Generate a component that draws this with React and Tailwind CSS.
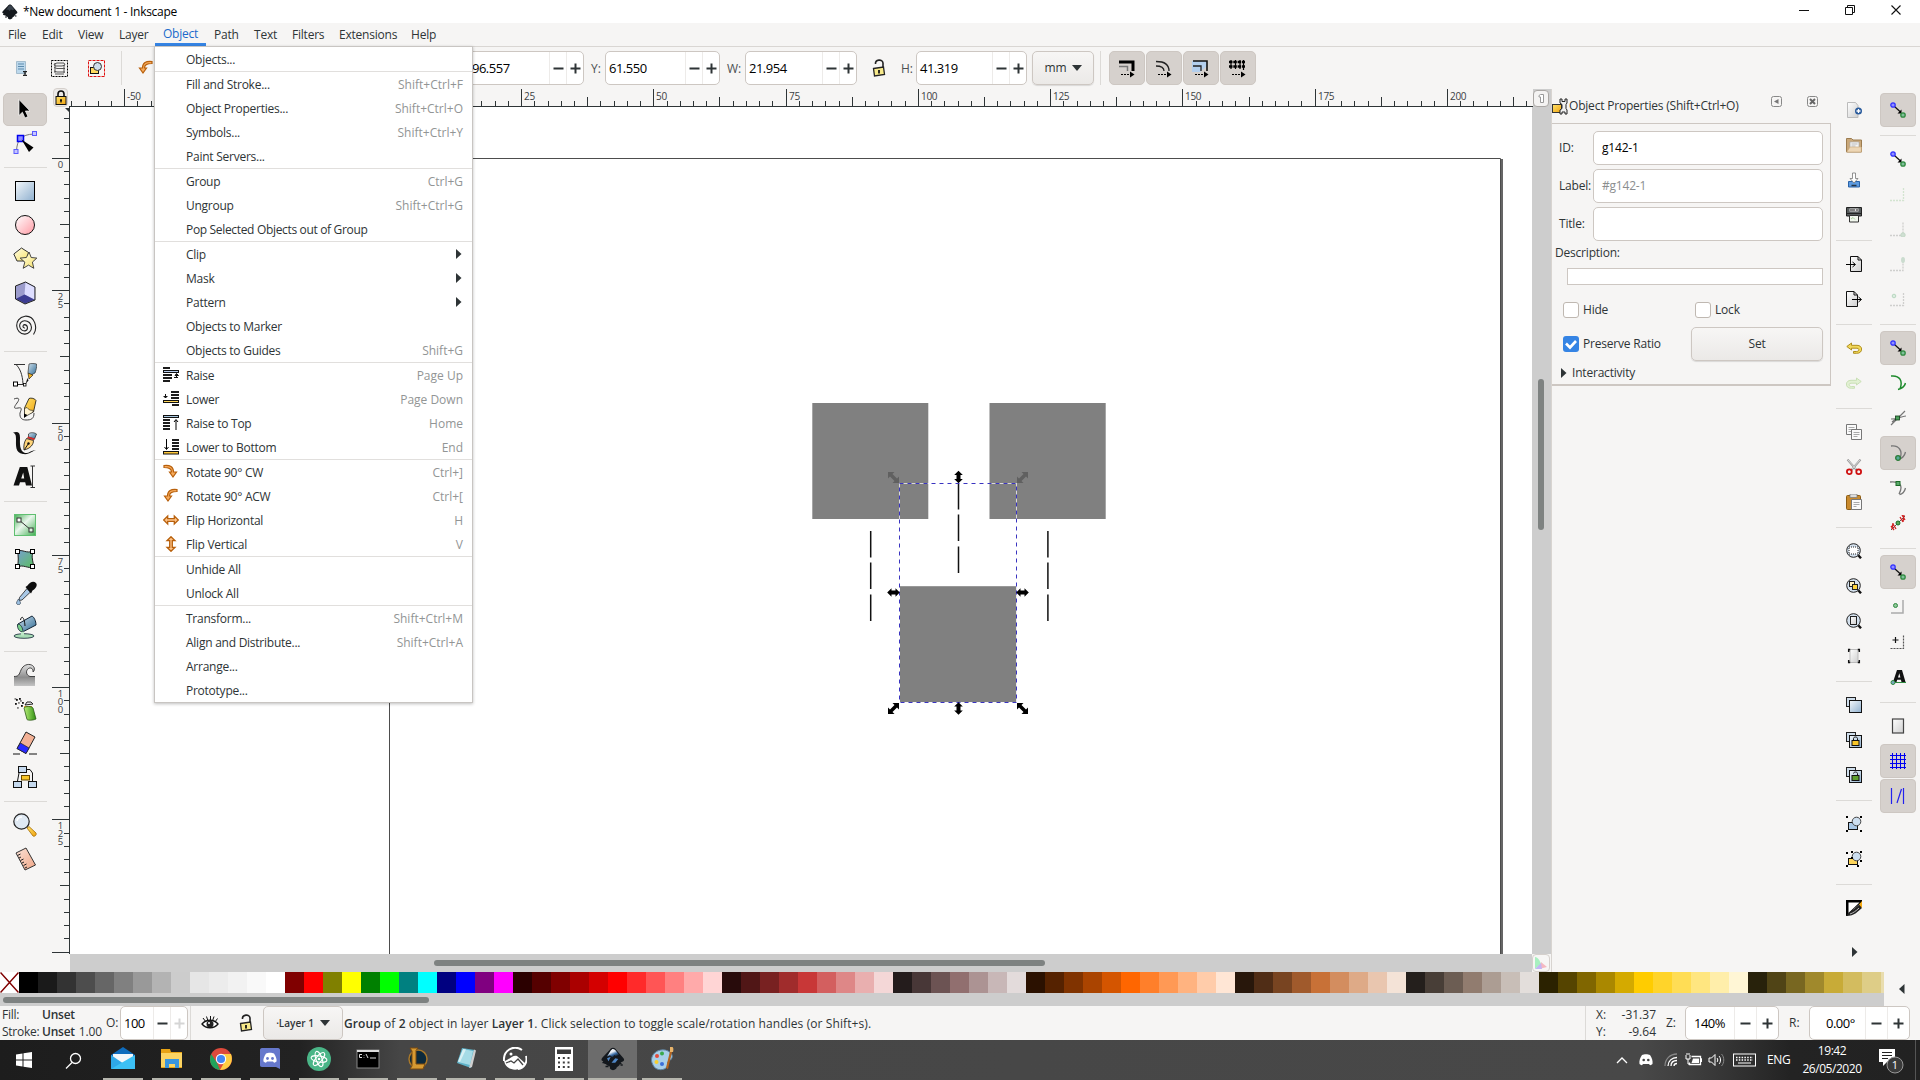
import React from "react";

const INK = "#2e3436";

/* ---------- small building blocks ---------- */

function Svg({ s = 24, w, h, vb, children, className = "" }) {
  return (
    <svg
      width={w || s}
      height={h || s}
      viewBox={vb || `0 0 ${w || s} ${h || s}`}
      fill="none"
      className={"block shrink-0 " + className}
    >
      {children}
    </svg>
  );
}

const Gradients = () => (
  <svg width="0" height="0" className="absolute">
    <defs>
      <linearGradient id="gBlue" x1="0" y1="0" x2="1" y2="1"><stop offset="0" stopColor="#f4f8fb" /><stop offset="1" stopColor="#8fb0cf" /></linearGradient>
      <linearGradient id="gPink" x1="0" y1="0" x2="1" y2="1"><stop offset="0" stopColor="#fff" /><stop offset="1" stopColor="#ff9aa4" /></linearGradient>
      <linearGradient id="gYellow" x1="0" y1="0" x2="1" y2="1"><stop offset="0" stopColor="#fffde8" /><stop offset="1" stopColor="#f8e36a" /></linearGradient>
      <linearGradient id="gGreen" x1="0" y1="0" x2="1" y2="1"><stop offset="0" stopColor="#48b058" /><stop offset=".45" stopColor="#eaf6ec" /><stop offset="1" stopColor="#3fae50" /></linearGradient>
      <linearGradient id="gMesh" x1="0" y1="0" x2="1" y2="1"><stop offset="0" stopColor="#76a0cf" /><stop offset="1" stopColor="#5cbf60" /></linearGradient>
      <linearGradient id="gGold" x1="0" y1="0" x2="1" y2="1"><stop offset="0" stopColor="#ffe36b" /><stop offset="1" stopColor="#f0a310" /></linearGradient>
      <linearGradient id="gGray" x1="0" y1="0" x2="0" y2="1"><stop offset="0" stopColor="#e0e0e0" /><stop offset=".6" stopColor="#8d8d8d" /><stop offset="1" stopColor="#c4c4c4" /></linearGradient>
      <linearGradient id="gSteel" x1="0" y1="0" x2="1" y2="1"><stop offset="0" stopColor="#cfe0ec" /><stop offset="1" stopColor="#2d6a94" /></linearGradient>
      <linearGradient id="gPaper" x1="0" y1="0" x2="1" y2="1"><stop offset="0" stopColor="#fff" /><stop offset="1" stopColor="#cfcfcf" /></linearGradient>
      <linearGradient id="gCan" x1="0" y1="0" x2="1" y2="0"><stop offset="0" stopColor="#b9f07a" /><stop offset="1" stopColor="#2f8f10" /></linearGradient>
      <linearGradient id="gSalmon" x1="0" y1="0" x2="1" y2="1"><stop offset="0" stopColor="#fbe3d8" /><stop offset="1" stopColor="#f0a585" /></linearGradient>
      <linearGradient id="gNight" x1="0" y1="0" x2=".6" y2="1"><stop offset="0" stopColor="#fff" /><stop offset=".45" stopColor="#e8eef5" /><stop offset=".7" stopColor="#3b6ea8" /><stop offset="1" stopColor="#0c0c0c" /></linearGradient>
    </defs>
  </svg>
);

/* ---------- toolbox icons (24 x 24) ---------- */

const toolIcons = {
  select: <><path d="M6 2.500v16l3.400-3.300 2.600 5.800 3-1.400-2.600-5.600H17z" fill="#000" stroke="#fff" strokeWidth=".7" /></>,
  node: <>
    <path d="M3.500 20C4 9 8 3.500 21 3" stroke="#777" />
    <rect x="1" y="18.500" width="4" height="4" fill="#c6c6ff" stroke="#5a5aff" />
    <rect x="19.500" y="0.500" width="4" height="4" fill="#c6c6ff" stroke="#5a5aff" />
    <rect x="4.500" y="4.500" width="6" height="6" fill="#8f8fff" stroke="#0000f0" strokeWidth="1.500" />
    <path d="M8.500 8.500l12 8-4.500 4.500z" fill="#000" />
  </>,
  rect: <rect x="2.500" y="2.500" width="19" height="19" fill="url(#gBlue)" stroke="#000" />,
  circle: <circle cx="12" cy="12" r="9.500" fill="url(#gPink)" stroke="#111" />,
  star: <>
    <path d="M8.500 1l7 4.500-2 8.500H4L0.800 7z" fill="url(#gYellow)" stroke="#333" />
    <path d="M16 5l2.200 5.500 5.600.6-4.400 4 1.400 6.200-5.300-3.200-5.300 3.200 1.600-6.200-4.600-4 6.200-.6z" fill="url(#gYellow)" stroke="#333" strokeWidth=".9" />
  </>,
  cube: <>
    <path d="M12.500 1L2.500 5v13l9.500 5 10-4V6z" fill="#9c9ccc" />
    <path d="M12.500 1.500l-1 12 10 5V6.200z" fill="#dedeff" />
    <path d="M11.500 13.500L3 17.800l9 4.700 9.500-3.800z" fill="#3d3d92" />
    <path d="M12.500 1L2.500 5v13l9.500 5 10-4V6z" stroke="#222" />
  </>,
  spiral: <path d="M12 13a1.700 1.700 0 0 1-.5-3.400a3.200 3.200 0 0 1 .5 6.300a5.100 5.100 0 0 1-.5-10.200a6.700 6.700 0 0 1 .5 13.400C2 19.500 0 3 12 1.200C22 .5 25 13 20.500 19.500" stroke="#222" strokeWidth="1.100" />,
  pen: <>
    <path d="M1 1.500h11M3 1.500c4 4 6.500 10 7 19.500M2 21.500h10" stroke="#333" />
    <rect x=".5" y="19" width="4" height="4" fill="#fff" stroke="#000" /><rect x="10.500" y="20.500" width="2.500" height="2.500" fill="#fff" stroke="#000" strokeWidth=".8" />
    <path d="M16 1c2-.8 6-.5 7.500 0 .6 3-.5 6-1.500 9l-5 2.500-2-3z" fill="url(#gSteel)" stroke="#333" strokeWidth=".7" />
    <path d="M15 10l5 2-4 4z" fill="#f3b321" stroke="#222" strokeWidth=".7" /><path d="M14.500 15l1 2.500-3 3.500z" fill="#111" />
  </>,
  pencil: <>
    <path d="M1 2c5-2 6 0 3 4s-4 6 1 5 3 2 2 5c-.5 5 2 7 6 7 5 0 8-1 8-7" stroke="#444" />
    <path d="M16 1.500c2-1 6 0 7 2L20.500 15l-9 3.500V11z" fill="url(#gGold)" stroke="#111" strokeWidth=".8" />
    <path d="M11.500 11.500l2.500-1 2.500 2.500 4 .5-1 2-8 4.500z" fill="#fff3cf" stroke="#111" strokeWidth=".6" /><path d="M11 16.500l3.500 1.500-3.500 3z" fill="#000" />
  </>,
  calli: <>
    <path d="M0 1.500c5-1.500 7 0 7 5S6 20 12 22c6 0 5-3 11-2.500-4 0-6 4.500-13 3.500C2 22 3 14 3 8 3 4 2.500 3 0 1.500z" fill="#111" />
    <path d="M15.500 3c2-2 6-1.500 8 0l-2 5-6-2z" fill="url(#gSteel)" stroke="#222" strokeWidth=".7" /><path d="M15 5.500l7 2-1 1.700-7-2z" fill="#d32b2b" />
    <path d="M13.500 7.500l7 2c0 4-3 8-9.500 9.500-.5-4 0-8 2.500-11.500z" fill="#ffd57a" stroke="#111" strokeWidth=".8" /><path d="M11.500 18.500l4-6" stroke="#111" /><circle cx="15.500" cy="12.500" r="1.200" fill="#111" />
  </>,
  text: <>
    <path fillRule="evenodd" d="M6.800 2h7.500L19 20.500h-6l-.8-3.200H7l-1 3.200H.5zM8.200 13.600h3l-1-6z" fill="#111" />
    <path d="M17.500 1h4.500M17.500 22.500h4.500M19.500 1v21.500" stroke="#333" />
  </>,
  gradient: <>
    <rect x="1.500" y="1.500" width="21" height="21" fill="url(#gGreen)" stroke="#5fbf70" /><path d="M6 7l12 10" stroke="#333" />
    <rect x="4" y="5" width="4" height="4" fill="#fff" stroke="#333" /><rect x="16" y="15" width="4" height="4" fill="#dff2e1" stroke="#333" />
  </>,
  mesh: <>
    <path d="M4.500 4c5-2 9 3 16 0-3 6 0 10 0 16-6 2-10-3-16 0 1-5 1-11 0-16z" fill="url(#gMesh)" stroke="#222" />
    {[[2.500, 2.500], [17.500, 2.500], [2.500, 17.500], [17.500, 17.500]].map(([x, y]) => <rect key={x + "-" + y} x={x} y={y} width="4" height="4" fill="#fff" stroke="#000" />)}
  </>,
  dropper: <>
    <path d="M14 7.500l3.500 3.500L9 19l-3 .5.500-3z" fill="#a9c8e6" stroke="#222" strokeWidth=".8" />
    <path d="M12.500 6l2-1.500C17 1 20.500-.5 23 2c2 2.500-.5 6-3.500 7.500L18 12.500z" fill="#0d0d0d" />
    <path d="M5.500 18c-1.200 2-2 3-2 4 0 2.200 4 2.200 4 0 0-1-.8-2-2-4z" fill="#9bbfe0" stroke="#345" strokeWidth=".7" />
  </>,
  bucket: <>
    <ellipse cx="11" cy="21" rx="10" ry="2.300" fill="#a8dcb5" stroke="#123" strokeWidth=".8" />
    <path d="M5 9L19 1c2 1 4 5 4 9L9.500 17C6.500 16 5 12 5 9z" fill="url(#gSteel)" stroke="#123" />
    <path d="M4.500 9.500c2-1.500 5.500 2.500 5.500 7.500-3 0-6-3-5.500-7.500z" fill="#79cf8b" stroke="#123" strokeWidth=".8" />
    <path d="M7.500 5c1-5 4-3 4.500 6" stroke="#111" /><path d="M8 17v3.500h3V16.500z" fill="#bfe8c8" />
  </>,
  tweak: <>
    <path d="M1 13.500c5 0 5-2 7-6.500 2-5 7-6.500 10.500-5 3 1.200 4 5 1.500 7 .5-3-2-5-4.500-3.500-3.500 2.500-2 7 1.500 8h5v9.500H1z" fill="url(#gGray)" />
    <path d="M1 13.500c5 0 5-2 7-6.500 2-5 7-6.500 10.500-5 3 1.200 4 5 1.500 7 .5-3-2-5-4.500-3.500-3.500 2.500-2 7 1.500 8h5" stroke="#333" strokeWidth=".9" />
  </>,
  spray: <>
    {[[3, 2], [7, 3], [2, 6], [5, 5], [9, 5], [4, 10], [8, 8], [1.500, 1], [6, 1]].map(([x, y], i) => <rect key={i} x={x} y={y} width="1.800" height="1.800" fill="#111" opacity={i % 2 ? 0.5 : 1} />)}
    <path d="M12 8l2-3h4l2 2z" fill="#e9e9e9" stroke="#222" /><path d="M11 9h8v2h-8z" fill="#e0a52b" />
    <path d="M11 11c1-2 8-2 9 0l3 11c-3 1.500-8 1.500-9 .5z" fill="url(#gCan)" stroke="#2c5a18" strokeWidth=".8" />
  </>,
  eraser: <>
    <path d="M13 1l9 5-9 16.500-9-5z" fill="#f3b195" stroke="#222" /><path d="M7.500 12l8.500 5-3 5.500-9-5z" fill="#2a2aff" stroke="#222" strokeWidth=".7" />
    <path d="M0 23h7M16 23h8" stroke="#111" />
  </>,
  connector: <>
    <path d="M6 8L4.500 16M14 4.500h3l2.500 3.500v9" stroke="#111" />
    <rect x="5.500" y="1.500" width="8" height="6" fill="#c5d9ee" stroke="#111" /><rect x="8.500" y="10.500" width="8" height="4.500" fill="#f8c629" stroke="#6b4a00" />
    <rect x=".5" y="16.500" width="8" height="6" fill="#c5d9ee" stroke="#111" /><rect x="15.500" y="16.500" width="8" height="6" fill="#c5d9ee" stroke="#111" />
  </>,
  zoom: <>
    <path d="M14 15l2-1.500 7 6.500c1 2-1.500 4-3 3z" fill="url(#gGold)" stroke="#a56b00" strokeWidth=".8" /><circle cx="8.500" cy="8.500" r="7.700" fill="#dfe9f3" stroke="#222" strokeWidth="1.200" />
    <path d="M4 8c.5-3 3-4 5-4" stroke="#fff" strokeWidth="1.500" />
  </>,
  measure: <>
    <path d="M3 6l10-5 9.500 17L12 23z" fill="url(#gSalmon)" stroke="#333" /><path d="M4.500 8.500l3-1.500M6 11l2-1M7.500 13.500l3-1.500M9 16l2-1M10.500 18.500l3-1.500M12 21l2-1" stroke="#222" />
  </>,
};

const TOOLS = [
  ["select", "node"],
  ["rect", "circle", "star", "cube", "spiral"],
  ["pen", "pencil", "calli", "text"],
  ["gradient", "mesh", "dropper", "bucket"],
  ["tweak", "spray", "eraser", "connector"],
  ["zoom", "measure"],
];

function Toolbox() {
  return (
    <div className="w-[52px] shrink-0 pt-[3px] pl-[3px] flex flex-col">
      {TOOLS.map((group, gi) => (
        <React.Fragment key={gi}>
          {gi > 0 && <div className="h-[14px] w-[43px] ml-px flex items-center"><div className="h-px w-full bg-[#dcdad7]" /></div>}
          {group.map((name) => (
            <div key={name} className="h-[34px] w-[44px] flex items-center justify-center">
              <div className={"h-[33px] w-[44px] rounded-[5px] flex items-center justify-center " + (name === "select" ? "bg-[#d6d1cd] border border-[#cdc7c2]" : "")}>
                <Svg>{toolIcons[name]}</Svg>
              </div>
            </div>
          ))}
        </React.Fragment>
      ))}
    </div>
  );
}

/* ---------- command bar icons (16 x 16) ---------- */

const Magnifier = ({ children }) => (
  <>
    <path d="M12 12l3 3.300" stroke="#111" strokeWidth="2.400" />
    <circle cx="7.500" cy="7.500" r="6.800" fill="#d4e1ee" stroke="#222" />
    {children}
  </>
);
const TwoSheets = ({ children }) => (
  <>
    <rect x=".5" y=".5" width="9" height="9" fill="#cfdeec" stroke="#222" />
    <rect x="3.500" y="3.500" width="12" height="12" fill="url(#gBlue)" stroke="#111" />
    {children}
  </>
);

const cmdIcons = {
  new: <><path d="M1.500.5h8l2.500 3v12H1.500z" fill="url(#gPaper)" stroke="#bbb" /><circle cx="12.500" cy="9" r="3.500" fill="#2a5b9c" /><path d="M12.500 7v4M10.500 9h4" stroke="#fff" strokeWidth="1.300" /></>,
  open: <><path d="M.5 1.500h5l1.500 1.500h8.500v12H.5z" fill="#c9a87a" stroke="#9c7c50" /><path d="M4 5h9v6H4z" fill="#f4f4f4" stroke="#aaa" strokeWidth=".7" /><path d="M5.500 7h6M5.500 9h4" stroke="#bbb" /><path d="M.8 15L4 10h11.300v5z" fill="#edd6b5" stroke="#c9a87a" strokeWidth=".6" /></>,
  save: <><path d="M2.500 9.500h11v5.500h-11z" fill="#5c9ae0" stroke="#2a63a8" /><path d="M5.500 13.500h5" stroke="#234" strokeWidth="1.500" /><path d="M6.500 1h3v5.500H12L8 11 4 6.500h2.500z" fill="#fff" stroke="#777" strokeWidth=".8" /></>,
  print: <><path d="M.5.500h15v8.500h-15z" fill="#565b5c" stroke="#222" /><path d="M3.500 1.500h9v3h-9z" fill="#dedede" /><path d="M4 3h5M10 3h2" stroke="#222" /><path d="M1 6.500h14" stroke="#222" /><path d="M3.500 8.500h9v6.500h-9z" fill="#f2f7ee" stroke="#333" /><path d="M5 12l2-1.500 2 2" stroke="#a7cf9b" /></>,
  import: <><path d="M4.500.5h7.500l3.500 3.500v11.500h-11z" fill="url(#gPaper)" stroke="#111" /><path d="M12 .5v3.500h3.500" stroke="#111" /><path d="M0 8.500h9M6.500 6l3 2.500-3 2.500" stroke="#000" /></>,
  export: <><path d="M.5.500h7.500L11.500 4v11.500H.5z" fill="url(#gPaper)" stroke="#111" /><path d="M8 .5V4h3.500" stroke="#111" /><path d="M6 8.500h9M12.500 6l3 2.500-3 2.500" stroke="#000" /></>,
  undo: <path d="M.8 6.500L5.500 3v2.300H11c6.500 0 6 8.500-.5 8H7.500v-1.800h3c3 0 3-3.300.5-3.300H5.500V10z" fill="#f2d85a" stroke="#a88510" strokeWidth=".9" />,
  redo: <path d="M15.200 6.500L10.500 3v2.300H5c-6.500 0-6 8.500.5 8H8.500v-1.800h-3c-3 0-3-3.300-.5-3.300h5.500V10z" fill="#e2f0d3" stroke="#c5deb0" strokeWidth=".9" />,
  copy: <><path d="M.5.500h10v10H.5z" fill="#fafafa" stroke="#777" /><path d="M2.500 3.500h6M2.500 5.500h6M2.500 7.500h4" stroke="#aaa" /><path d="M5.500 5.500h10v10h-10z" fill="#fafafa" stroke="#777" /><path d="M7.500 8.500h6M7.500 10.500h6M7.500 12.500h4" stroke="#aaa" /></>,
  cut: <><path d="M1.500.5L10.500 11M14.500.5L5.500 11" stroke="#999" strokeWidth="2" /><path d="M2 1l8 9M14 1L6 10" stroke="#f0f0f0" strokeWidth=".7" /><circle cx="3.300" cy="12.700" r="2.400" stroke="#cf1010" strokeWidth="1.800" /><circle cx="12.700" cy="12.700" r="2.400" stroke="#cf1010" strokeWidth="1.800" /></>,
  paste: <><rect x=".5" y="1.500" width="14" height="14" rx="1" fill="#c98a2d" stroke="#8c5c14" /><rect x="4" y="0" width="7" height="3.500" fill="#ddd" stroke="#777" strokeWidth=".7" /><path d="M5.500 5.500h10v10h-10z" fill="#fafafa" stroke="#777" /><path d="M7.500 8.500h6M7.500 10.500h6M7.500 12.500h3" stroke="#aaa" /></>,
  zsel: <Magnifier><rect x="3" y="4" width="9" height="7" fill="#fff" stroke="#222" strokeDasharray="1 1" /></Magnifier>,
  zdraw: <Magnifier><rect x="3.500" y="3.500" width="5" height="5" fill="#fff3c2" stroke="#222" /><rect x="6.500" y="6.500" width="5" height="5" fill="#ffd640" stroke="#222" /></Magnifier>,
  zpage: <Magnifier><rect x="4.500" y="3.500" width="6" height="8" fill="url(#gPaper)" stroke="#222" /></Magnifier>,
  zwidth: <><rect x="4" y="1.500" width="8" height="13" fill="url(#gPaper)" stroke="#bbb" /><path d="M2.700 4V1.500h1.500M13.300 4V1.500h-1.500M2.700 12v2.500h1.500M13.300 12v2.500h-1.500" stroke="#111" strokeWidth="1.500" /></>,
  dup: <TwoSheets />,
  clone: <TwoSheets><rect x="6" y="8.500" width="7" height="5" fill="#f8c629" stroke="#111" /><path d="M7.500 8.500V6.500c0-2 4-2 4 0v2" stroke="#111" /></TwoSheets>,
  unlink: <TwoSheets><rect x="6" y="8.500" width="7" height="5" fill="#5e9e2e" stroke="#111" /><path d="M7.500 6.500c0-2 4-2 4 0v2" stroke="#111" /></TwoSheets>,
  group: <><rect x="2.500" y="6.500" width="9" height="7" fill="#a9c8e6" stroke="#111" /><circle cx="10.500" cy="5.500" r="4.300" fill="#cddff0" stroke="#444" />{[[0, 0], [14, 0], [0, 14], [14, 14]].map(([x, y]) => <rect key={x + "." + y} x={x} y={y} width="2" height="2" fill="#000" />)}</>,
  ungroup: <><rect x="2.500" y="7.500" width="9" height="6" fill="#ffd65a" stroke="#111" /><circle cx="10.500" cy="5.500" r="4.300" fill="#cddff0" stroke="#444" />{[[0, 1], [5, 0], [14, 0], [0, 14], [11, 14], [14, 9], [5, 6]].map(([x, y]) => <rect key={x + "." + y} x={x} y={y} width="2" height="2" fill="#000" />)}</>,
  fill: <><path d="M0 0h16v16H0z" fill="#f6f5f4" /><path d="M0 0h16v2L2 14v2H0z" fill="#000" /><path d="M2.500 2.500h11L2.500 13z" fill="#fff" /><path d="M0 16c2-3 4-5 8-7l6-5 2 4c-4 3-7 8-16 8z" fill="#222" /><path d="M4 14c3-1 6-3 9-6" stroke="#bbb" /><path d="M13 4.500l3-3.500v7z" fill="#f5a911" /></>,
};

const COMMANDS = [
  ["new", "open", "save", "print"],
  ["import", "export"],
  ["undo", "redo"],
  ["copy", "cut", "paste"],
  ["zsel", "zdraw", "zpage", "zwidth"],
  ["dup", "clone", "unlink"],
  ["group", "ungroup"],
  ["fill"],
];

const SnapPair = () => (
  <>
    <path d="M4.500 4.500l6 5.500" stroke="#111" strokeWidth="1.200" />
    <path d="M11.500 7.500v4h-4z" fill="#000" />
    <circle cx="3" cy="3" r="2.200" fill="#8f8fff" stroke="#3333ff" strokeWidth="1.300" />
    <circle cx="13" cy="13" r="2.200" fill="#7fbf9a" stroke="#2f8a3f" strokeWidth="1.300" />
  </>
);
const dots = (d, color) => <path d={d} stroke={color} strokeWidth="1.300" strokeDasharray="2 1" />;
const snapIcons = {
  pair: <SnapPair />,
  bbox: dots("M0 14.500h13.500V1", "#d3e4d0"),
  bboxEdge: <>{dots("M0 14.500h13V1", "#cfcfcd")}<circle cx="13" cy="14" r="2.200" fill="#cfdfd2" stroke="#c3d8c6" /></>,
  bboxCorner: <>{dots("M0 14.500h13V6", "#cfcfcd")}<ellipse cx="13" cy="4" rx="2" ry="3" fill="#cbdccf" /></>,
  bboxMid: <>{dots("M0 14.500h13.500V1", "#cfcfcd")}<circle cx="4" cy="5" r="1.800" fill="#dcebe0" stroke="#b8d8c0" /></>,
  path: <path d="M1 1c9-1 12 5 9 13M15.500 8c-1 4-3 5.500-7.500 6.500" stroke="#1e8a2c" strokeWidth="1.500" />,
  cross: <><path d="M1 15L15 1M1 9c6 0 9-2 15-3M2 12l5-4" stroke="#777" strokeWidth="1.200" /><rect x="5.500" y="6" width="4" height="4" fill="#4aa05a" stroke="#123a18" strokeWidth=".8" /></>,
  cusp: <><path d="M1 1c8-1 12 5 9 12M15.500 7c-1 4-3 6-6 7" stroke="#777" strokeWidth="1.300" /><circle cx="8" cy="13" r="2.300" fill="#5a9" stroke="#2a7a35" strokeWidth="1.300" /></>,
  smooth: <><path d="M0 2c9-1 14 3 9 12M15.500 8c-1 4-3 6-6 6.500" stroke="#777" strokeWidth="1.300" /><rect x="6" y="1.500" width="4" height="4" fill="#5aa86a" stroke="#1a6a25" /></>,
  mid: <><path d="M1 15L15 1" stroke="#555" /><path d="M1 11l3 4M3 9l3 5M10 2l3 5M12 0l3 5M2 14l1-6M13 7l1-7" stroke="#d02020" strokeWidth="1.300" /><circle cx="8" cy="8" r="2" fill="#5a5" stroke="#1a6a25" /></>,
  center: <><path d="M1 14h12V1" stroke="#aaa" strokeWidth="1.500" /><circle cx="5.500" cy="6.500" r="2" fill="#8fc79a" stroke="#2f8a3f" /></>,
  rot: <><path d="M.5 14.500h13V1" stroke="#555" strokeWidth="1.200" strokeDasharray="2 1" /><path d="M5.500 3v6M2.500 6h6" stroke="#111" strokeWidth="1.200" /></>,
  baseline: <><path fillRule="evenodd" d="M7 1h5l3.500 12h-4l-.6-2.200H7.200L6.500 13H3zM8 8.500h2.400L9.300 4.300z" fill="#111" /><path d="M2 13.500h14" stroke="#2f8a3f" /><circle cx="3" cy="13.500" r="2" fill="#7aa8c0" stroke="#2f8a3f" /></>,
  page: <rect x="2.500" y="1" width="11" height="14" fill="url(#gPaper)" stroke="#444" strokeWidth="1.200" />,
  grid: <path d="M0 2.500h16M0 6.500h16M0 10.500h16M0 14.500h16M2.500 0v16M6.500 0v16M10.500 0v16M14.500 0v16" stroke="#0000f0" />,
  guides: <path d="M1.500 0v16M13.500 0v16M7 15L11.500 1" stroke="#2222ee" strokeWidth="1.200" />,
};

const SNAPS = [
  [["pair", 1]],
  [["pair"], ["bbox"], ["bboxEdge"], ["bboxCorner"], ["bboxMid"]],
  [["pair", 1], ["path"], ["cross"], ["cusp", 1], ["smooth"], ["mid"]],
  [["pair", 1], ["center"], ["rot"], ["baseline"]],
  [["page"], ["grid", 1], ["guides", 1]],
];

function IconColumn({ groups, icons, className }) {
  return (
    <div className={"shrink-0 pt-[4px] flex flex-col items-center " + className}>
      {groups.map((g, gi) => (
        <React.Fragment key={gi}>
          {gi > 0 && <div className="h-[14px] w-[36px] flex items-center"><div className="h-px w-full bg-[#dcdad7]" /></div>}
          {g.map((item, i) => {
            const [name, on] = Array.isArray(item) ? item : [item, 0];
            return (
              <div key={i} className="h-[35px] w-[36px]">
                <div className={"h-[34px] w-[36px] rounded-[4px] flex items-center justify-center " + (on ? "bg-[#d6d1cd] border border-[#cdc7c2]" : "")}>
                  <Svg s={16}>{icons[name]}</Svg>
                </div>
              </div>
            );
          })}
        </React.Fragment>
      ))}
      {icons === cmdIcons && (
        <Svg w={6} h={10} className="mt-[21px] ml-[2px]"><path d="M0 0l5.500 5L0 10z" fill={INK} /></Svg>
      )}
    </div>
  );
}

/* ---------- window title and menus ---------- */

const InkscapeLogo = ({ size = 16 }) => (
  <Svg s={size} vb="0 0 32 32">
    <path d="M16 1c2 0 3 1 4.500 3L30 15c2 3 0 4.500-4 5.500 3 1 1 2.500-1 2.500 0 2-3 3-4 4 0 2-2 3-5 4-3-1-5-2-4-4 0-2-5-2-5-4-3-1-6-1-5-3 2 0 1-1-1-2-1-1 0-2.500 1-4L11.500 4C13 2 14 1 16 1z" fill="#14181d" />
    <path d="M16 2.500c1.500 0 2.500 1 3.500 2l5 6.500-4 1.500-2.500-2-2.500 3.500-3.500-3-4 1.500 5-8c1-1.200 2-2 3-2z" fill={size > 20 ? "url(#gNight)" : "#39424c"} />
    {size > 20 && <path d="M8 15l5-2-3 6zM14 21l5-6 4 1-4 5z" fill="#4f86c6" />}
    <path d="M6 26h4M26 24h3" stroke="#14181d" strokeWidth="2" />
  </Svg>
);

function TitleBar() {
  return (
    <div className="h-[23px] shrink-0 bg-white flex items-center pl-[2px] text-[12px] text-black">
      <InkscapeLogo size={16} />
      <span className="ml-[5px] tracking-[-0.28px]">*New document 1 - Inkscape</span>
      <div className="ml-auto flex items-center gap-[36px] pr-[19px] pb-[3px]">
        <Svg s={10}><path d="M0 5.500h10" stroke="#111" /></Svg>
        <Svg s={10}><path d="M.5 2.500h7v7h-7zM2.500 2.500v-2h7v7h-2" stroke="#111" /></Svg>
        <Svg s={10}><path d="M.5.500l9 9M9.500.500l-9 9" stroke="#111" strokeWidth="1.100" /></Svg>
      </div>
    </div>
  );
}

const MENUS = [
  ["File", "w-[34px]"], ["Edit", "w-[36px]"], ["View", "w-[41px]"], ["Layer", "w-[44px]"], ["Object", "w-[51px]"],
  ["Path", "w-[40px]"], ["Text", "w-[38px]"], ["Filters", "w-[47px]"], ["Extensions", "w-[72px]"], ["Help", "w-[42px]"],
];

function MenuBar() {
  return (
    <div className="h-[24px] shrink-0 flex border-b border-[#d9d6d3] text-[12px] text-[#2e3436] tracking-[-0.22px]">
      {MENUS.map(([m, w]) => (
        <div key={m} className={"h-[23px] flex items-center pl-[8px] pt-px " + w + (m === "Object" ? " text-[#1b6acb] border-b-[3px] border-[#3584e4] pt-[4px]" : "")}>
          {m}
        </div>
      ))}
    </div>
  );
}

const bars = (xs) => xs.map(([x, y, w], i) => <rect key={i} x={x} y={y} width={w} height="2" fill="#1c1c1c" />);
const curl = "M1 1.500c6-.8 9.500 1.500 9.500 6.500h3L10 13 6.500 8H8.500c0-3-2.500-4.500-7.500-4.500z";
const flat = "M.7 8l4-4v2.700h6.600V4l4 4-4 4V9.300H4.700V12z";
const menuIcons = {
  raise: <>{bars([[0, 0, 7], [0, 7, 9], [0, 10, 9], [0, 13, 7]])}<rect x=".5" y="3.500" width="15" height="2" fill="#b7cdf0" stroke="#111" /><path d="M11 10.500h4M13.500 7v3.500M12 8.500l1.500-2 2 2z" stroke="#111" /></>,
  lower: <>{bars([[8, 0, 8], [8, 3, 8], [8, 6, 8], [9, 13, 7]])}<rect x=".5" y="9.500" width="15" height="2" fill="#ffd65a" stroke="#111" /><path d="M.5 5.500h4M2.500 3v4M1 6h3" stroke="#111" /></>,
  top: <>{bars([[0, 4, 7], [0, 7, 7], [0, 10, 7], [0, 13, 7]])}<rect x=".5" y=".5" width="15" height="2" fill="#a8c8e0" stroke="#111" /><path d="M13 15V5M11 7l2-2.500L15 7" stroke="#000" /></>,
  bottom: <>{bars([[9, 0, 7], [9, 3, 7], [9, 6, 7], [9, 9, 7]])}<rect x=".5" y="12.500" width="15" height="2.500" fill="#ffc83a" stroke="#111" /><path d="M3.500 0v10M1.500 8l2 2.500 2-2.500" stroke="#000" /></>,
  cw: <path d={curl} fill="#f7ab5c" stroke="#b8600c" strokeWidth="1.200" />,
  acw: <g transform="translate(15 0) scale(-1 1)"><path d={curl} fill="#f7ab5c" stroke="#b8600c" strokeWidth="1.200" /></g>,
  fliph: <path d={flat} fill="#ffc488" stroke="#b8600c" strokeWidth="1.300" />,
  flipv: <g transform="rotate(90 8 8)"><path d={flat} fill="#ffc488" stroke="#b8600c" strokeWidth="1.300" /></g>,
};

const OBJECT_MENU = [
  [["Objects..."]],
  [["Fill and Stroke...", "Shift+Ctrl+F"], ["Object Properties...", "Shift+Ctrl+O"], ["Symbols...", "Shift+Ctrl+Y"], ["Paint Servers..."]],
  [["Group", "Ctrl+G"], ["Ungroup", "Shift+Ctrl+G"], ["Pop Selected Objects out of Group"]],
  [["Clip", ">"], ["Mask", ">"], ["Pattern", ">"], ["Objects to Marker"], ["Objects to Guides", "Shift+G"]],
  [["Raise", "Page Up", "raise"], ["Lower", "Page Down", "lower"], ["Raise to Top", "Home", "top"], ["Lower to Bottom", "End", "bottom"]],
  [["Rotate 90° CW", "Ctrl+]", "cw"], ["Rotate 90° ACW", "Ctrl+[", "acw"], ["Flip Horizontal", "H", "fliph"], ["Flip Vertical", "V", "flipv"]],
  [["Unhide All"], ["Unlock All"]],
  [["Transform...", "Shift+Ctrl+M"], ["Align and Distribute...", "Shift+Ctrl+A"], ["Arrange..."], ["Prototype..."]],
];

function ObjectMenu() {
  return (
    <div className="absolute left-[154px] top-[46px] w-[319px] bg-white border border-[#c8c5c2] shadow-[0_1px_3px_rgba(0,0,0,0.25)] text-[12px] text-[#2e3436]">
      {OBJECT_MENU.map((group, gi) => (
        <div key={gi} className={gi ? "border-t border-[#e1dfdd]" : ""}>
          {group.map(([label, accel, icon]) => (
            <div key={label} className="h-[24px] flex items-center pl-[8px] pr-[9px]">
              <div className="w-[16px] h-[16px] mr-[7px]">{icon && <Svg s={16}>{menuIcons[icon]}</Svg>}</div>
              <span className={label.length > 30 ? "pt-px tracking-[-0.33px]" : "pt-px tracking-[-0.25px]"}>{label}</span>
              {accel === ">" ? (
                <Svg w={6} h={10} className="ml-auto mr-[1px]"><path d="M0 0l5.500 5L0 10z" fill={INK} /></Svg>
              ) : (
                <span className="ml-auto pt-px text-[#929595]">{accel}</span>
              )}
            </div>
          ))}
        </div>
      ))}
    </div>
  );
}

/* ---------- controls ---------- */

function Spin({ value, className, btn = "w-[17px]", align = "pl-[3px]", dim }) {
  return (
    <div className={"h-[34px] shrink-0 bg-white border border-[#cdc7c2] rounded-[5px] flex items-center text-[13px] text-black overflow-hidden " + className}>
      <span className={"flex-1 pt-px tracking-[-0.5px] " + align}>{value}</span>
      <div className={"h-full border-l border-[#edebe9] flex items-center justify-center " + btn}>
        <Svg s={11}><path d="M.5 5.500h10" stroke={INK} strokeWidth="2" /></Svg>
      </div>
      <div className={"h-full border-l border-[#edebe9] flex items-center justify-center " + btn}>
        <Svg s={11}><path d="M.5 5.500h10M5.500.5v10" stroke={dim ? "#d5d5d5" : INK} strokeWidth="2" /></Svg>
      </div>
    </div>
  );
}

const OpenLock = () => (
  <Svg w={14} h={18}>
    <path d="M3.500 5C3 .5 10.500-.5 11 4v5" stroke="#222" strokeWidth="1.600" />
    <path d="M1.500 9.500l10-1.500 1 7.500-10 1.500z" fill="#f7e98a" stroke="#222" strokeWidth="1.300" />
    <path d="M7 11v3.500" stroke="#111" strokeWidth="1.800" />
  </Svg>
);

const affectIcons = [
  <><path d="M1 2h14v9" stroke="#000" strokeWidth="3" /><path d="M1 6.500h8.500V11" stroke="#777" strokeWidth="1.500" /></>,
  <><path d="M1 1.500c9 0 13 3 13 9.500" stroke="#222" strokeWidth="1.300" /><path d="M1 6c5 0 8 1 8 5" stroke="#222" strokeWidth="1.300" /></>,
  <><path d="M0 1h15v5L8 12H0z" fill="#b3cfee" /><path d="M1 1h14v10" stroke="#111" strokeWidth="1.600" /><path d="M1 6h8v5" stroke="#222" strokeWidth="1.300" /></>,
  <><path d="M0 2h16M0 6.500h16" stroke="#000" strokeWidth="2.600" strokeDasharray="3.500 .8" /><path d="M2 0v9M6.500 0v9M11 0v9M14.500 0v10" stroke="#000" strokeWidth="1.200" /></>,
];

function ToolBar() {
  return (
    <div className="h-[42px] shrink-0 flex items-start pt-[4px] text-[12px] text-[#4c5052]">
      <div className="w-[121px] h-[34px] flex items-center pl-[14px] gap-[20px]">
        <Svg s={17}><path d="M2.500 1.500h9v12h-9z" fill="#bcd8ec" stroke="#a4bccd" /><path d="M4 4h6M4 6.500h6M4 9h6" stroke="#5d8bae" /><path d="M9 11.500h4M9 15.500h4M9.500 11.500l3 4M12.500 11.500l-3 4" stroke="#111" strokeWidth=".9" /></Svg>
        <Svg s={17}><rect x=".5" y=".5" width="16" height="16" stroke="#000" strokeDasharray="2 1" /><path d="M3 4l3-1h7l1 2-3 1H4zM3 7.500l3 1h8M3 11l3 1h8M4 14h9M4 4v9M13 5v8" fill="#eee" stroke="#555" /></Svg>
        <Svg s={17}><rect x=".5" y=".5" width="16" height="16" stroke="#e01010" strokeDasharray="3 1" /><rect x="2.500" y="7.500" width="8" height="6" fill="#ffd95e" stroke="#111" /><circle cx="9.500" cy="6.500" r="4" fill="#cfdeeb" stroke="#333" /></Svg>
      </div>
      <div className="h-[34px] w-px bg-[#dcdad7]" />
      <div className="h-[34px] w-[330px] flex items-center pl-[16px]"><Svg s={16}>{menuIcons.acw}</Svg></div>
      <Spin value="96.557" className="w-[117px] ml-[15px]" align="pl-[4px]" />
      <span className="w-[21px] pl-[7px] leading-[35px]">Y:</span>
      <Spin value="61.550" className="w-[115px]" />
      <span className="w-[25px] pl-[7px] leading-[35px]">W:</span>
      <Spin value="21.954" className="w-[112px]" />
      <div className="w-[44px] h-[34px] flex items-center justify-center"><OpenLock /></div>
      <span className="w-[15px] leading-[35px]">H:</span>
      <Spin value="41.319" className="w-[111px]" />
      <div className="ml-[5px] w-[62px] h-[34px] rounded-[5px] border border-[#cdc7c2] bg-linear-to-b from-[#f7f6f5] to-[#ebe9e7] shadow-[0_1px_1px_rgba(0,0,0,0.12)] flex items-center justify-center gap-[5px] text-[#2e3436]">
        mm <Svg w={10} h={6}><path d="M0 0h10L5 6z" fill={INK} /></Svg>
      </div>
      <div className="ml-[6px] mr-[8px] h-[34px] w-px bg-[#dcdad7]" />
      <div className="flex gap-px">
        {affectIcons.map((ic, i) => (
          <div key={i} className="w-[36px] h-[34px] rounded-[5px] border border-[#cdc7c2] bg-[#d6d1cd] flex items-center justify-center">
            <Svg s={18} className="mt-[2px]">
              {ic}
              <path d="M3 14.500h10" stroke="#000" strokeWidth="1.200" strokeDasharray="2 1" /><path d="M12 11.500l4.500 3-4.500 3z" fill="#000" />
            </Svg>
          </div>
        ))}
      </div>
    </div>
  );
}

/* ---------- rulers and canvas ---------- */

const STEP = 132.27;

function HRuler() {
  const ticks = [];
  for (let k = -24; k <= 86; k++) {
    const x = Math.round(389 + (k * STEP) / 10 - 52.2) + 0.5;
    if (x < 17 || x > 1480) continue;
    const major = k % 10 === 0;
    const mid = k % 5 === 0;
    ticks.push(<path key={k} d={`M${x} ${major ? 0 : mid ? 8 : 12}V17`} stroke={INK} />);
    if (major) ticks.push(<text key={"t" + k} x={x + 2.500} y="10.500" fontSize="10" letterSpacing="-.3" fill="#3b4043">{k * 2.5}</text>);
  }
  return <Svg w={1481} h={18}>{ticks}<path d="M17 17.500h1464" stroke={INK} /></Svg>;
}

function VRuler() {
  const ticks = [];
  for (let k = -3; k <= 60; k++) {
    const y = Math.round(158 + (k * STEP) / 10 - 107) + 0.5;
    if (y < 5 || y > 847) continue;
    const major = k % 10 === 0;
    const mid = k % 5 === 0;
    ticks.push(<path key={k} d={`M${major ? 0 : mid ? 8 : 12} ${y}H17`} stroke={INK} />);
    if (major && k < 60)
      String(k * 2.5).split("").forEach((c, i) =>
        ticks.push(<text key={k + "t" + i} x="8.500" y={y + 9.500 + i * 8} textAnchor="middle" fontSize="9.500" fill="#3b4043">{c}</text>)
      );
  }
  return <Svg w={18} h={847}>{ticks}<path d="M17.500 0v847" stroke={INK} /><path d="M13 1h4v4z" fill={INK} /></Svg>;
}

const DoubleArrow = ({ x, y, r, fill = "#000" }) => (
  <path transform={`translate(${x} ${y}) rotate(${r})`} d="M0-6.300L4.300-2H2V2h2.300L0 6.300-4.300 2H-2v-4h-2.300z" fill={fill} />
);
const DiagArrow = ({ x, y, flip, fill = "#000" }) => (
  <path transform={`translate(${x} ${y}) scale(${flip ? -1 : 1} 1)`} d="M-5.500-5.500H1L-1-3.500 3.500 1l2-2v6.500H-1l2-2L-3.500-1l-2 2z" fill={fill} />
);

function Canvas() {
  const lines = [[870.7, 531], [958.5, 483], [1047.9, 531]];
  return (
    <Svg w={1462} h={847} vb="70 107 1462 847" className="bg-white">
      <path d="M1500 159h3v800h-3z" fill="#666" />
      <path d="M389.500 960V158.500H1500.500V960" stroke="#4d4d4d" />
      <rect x="812.300" y="403" width="116" height="116" fill="#808080" />
      <rect x="989.500" y="403" width="116.200" height="116" fill="#808080" />
      <rect x="900" y="586.200" width="116.500" height="116" fill="#808080" />
      {lines.map(([x, y]) => (
        <path key={x} d={`M${x} ${y}v26.500m0 5v26.500m0 5.500v26.500`} stroke="#111" strokeWidth="1.500" />
      ))}
      <rect x="899.500" y="483.500" width="117" height="219" stroke="#fff" opacity=".7" />
      <rect x="899.500" y="483.500" width="117" height="219" stroke="#3a34c0" strokeDasharray="4 4" />
      <DoubleArrow x={958.5} y={477} r={0} />
      <DoubleArrow x={958.5} y={708.5} r={0} />
      <DoubleArrow x={893.5} y={592.5} r={90} />
      <DoubleArrow x={1022.5} y={592.5} r={90} />
      <DiagArrow x={893.5} y={477.5} fill="#606060" />
      <DiagArrow x={1022.5} y={477.5} flip fill="#606060" />
      <DiagArrow x={893.5} y={708.500} flip />
      <DiagArrow x={1022.5} y={708.500} />
    </Svg>
  );
}

function Workspace() {
  return (
    <div className="w-[1499px] shrink-0 flex flex-col">
      <div className="h-[18px] flex relative">
        <HRuler />
        <div className="w-[18px] bg-[#cdcdcd] flex items-center">
          <div className="w-[16px] h-[17px] shrink-0 rounded-[4px] border border-[#aaa7a4] bg-[#f4f3f2] flex items-center justify-center">
            <Svg w={6} h={9}><path d="M1 1.500L2.500.5h3v8h-3V3H1z" fill="#fff" stroke="#999" /></Svg>
          </div>
        </div>
        <div className="absolute left-px top-[-1px] w-[15px] h-[19px] rounded-[4px] border border-[#d5d0cc] bg-[#eceae8] flex items-center justify-center">
          <Svg w={12} h={15}><path d="M3 7V4c0-4 6-4 6 0v3" stroke="#111" strokeWidth="1.600" /><rect x="1" y="6.500" width="10" height="8" fill="url(#gGold)" stroke="#111" /><path d="M6 9v3.500M5 10.500h2" stroke="#111" strokeWidth="1.300" /></Svg>
        </div>
      </div>
      <div className="h-[847px] flex">
        <VRuler />
        <Canvas />
        <div className="w-[19px] bg-[#cdcdcd] pl-[6px] pt-[272px]">
          <div className="w-[6px] h-[151px] rounded-[3px] bg-[#7e8281]" />
        </div>
      </div>
      <div className="h-[18px] flex pl-[18px]">
        <div className="w-[1462px] bg-[#cdcdcd] pl-[364px] pt-[6px]">
          <div className="w-[611px] h-[6px] rounded-[3px] bg-[#7e8281]" />
        </div>
        <div className="w-[19px] flex items-center">
          <div className="w-[18px] h-[18px] rounded-[4px] border border-[#d5d0cc] bg-[#f7f6f5] flex items-center justify-center">
            <Svg w={14} h={16}><path d="M1 2c3 0 5 4 6 7L1 14z" fill="#a8f0c0" /><path d="M7 7l6 5-6 1.500z" fill="#f5b9c0" /><path d="M1 14l6-6 1 6z" fill="#c3b5f5" /></Svg>
          </div>
        </div>
      </div>
    </div>
  );
}

/* ---------- object properties dock ---------- */

const Field = ({ label, children }) => (
  <div className="flex items-center h-[38px]">
    <span className="w-[34px] whitespace-nowrap">{label}</span>
    {children}
  </div>
);
const input = "w-[230px] h-[34px] rounded-[5px] border border-[#cdc7c2] bg-white flex items-center pl-[8px]";
const Check = ({ label, on, w }) => (
  <div className={"flex items-center gap-[4px] whitespace-nowrap " + w}>
    <div className={"w-[16px] h-[16px] shrink-0 rounded-[3px] flex items-center justify-center " + (on ? "bg-[#3584e4]" : "bg-white border border-[#bfb8b1]")}>
      {on && <Svg s={16}><path d="M3 7.500L7 11.500l6-6.500" stroke="#fff" strokeWidth="2.600" /></Svg>}
    </div>
    <span>{label}</span>
  </div>
);

function Dock() {
  return (
    <div className="w-[280px] shrink-0 text-[12px] text-[#2e3436] border-l border-[#d8d4d0] tracking-[-0.2px]">
      <div className="h-[34px] flex items-center">
        <Svg s={17}><rect x=".5" y="6.500" width="9" height="8" fill="url(#gGold)" stroke="#333" /><path d="M8 1v4l2 1.500v4L8 12v4h2v-2h3v2h2v-4l-1-1.500v-4L15 5V1h-2v2.500h-3V1z" fill="#eee" stroke="#222" /></Svg>
        <span className="w-[202px] whitespace-nowrap">Object Properties (Shift+Ctrl+O)</span>
        <Svg s={11} className="mb-[9px]"><rect x=".5" y=".5" width="10" height="10" rx="2" stroke="#888" /><path d="M7.500 3v5L3 5.500z" fill="#777" /></Svg>
        <Svg s={11} className="mb-[9px] ml-[25px]"><rect x=".5" y=".5" width="10" height="10" rx="2" stroke="#888" /><path d="M3 3l5 5M8 3L3 8" stroke="#666" strokeWidth="2" /></Svg>
      </div>
      <div className="h-[263px] border border-l-0 border-b-2 border-[#cdc7c2] pt-[5px] pl-[7px] pr-[7px] flex flex-col">
        <Field label="ID:"><div className={input + " text-black"}>g142-1</div></Field>
        <Field label="Label:"><div className={input + " text-[#8b8e8f]"}>#g142-1</div></Field>
        <Field label="Title:"><div className={input} /></Field>
        <div className="-ml-[4px] h-[20px] leading-[20px]">Description:</div>
        <div className="ml-[8px] w-[256px] h-[17px] border border-[#cdc7c2] bg-white mt-[5px]" />
        <div className="flex pl-[4px] mt-[16px] h-[18px] items-center"><Check label="Hide" w="w-[132px]" /><Check label="Lock" w="w-[100px]" /></div>
        <div className="flex pl-[4px] mt-[8px] h-[34px] items-center justify-between">
          <Check label="Preserve Ratio" on w="w-[124px]" />
          <div className="w-[132px] h-[34px] shrink-0 rounded-[5px] border border-[#cdc7c2] bg-linear-to-b from-[#f7f6f5] to-[#ebe9e7] shadow-[0_1px_1px_rgba(0,0,0,0.12)] flex items-center justify-center">Set</div>
        </div>
        <div className="flex items-center gap-[5px] pl-[2px] mt-[3px] h-[17px]">
          <Svg w={6} h={10}><path d="M0 0l5.500 5L0 10z" fill={INK} /></Svg>Interactivity
        </div>
      </div>
    </div>
  );
}

/* ---------- palette ---------- */

const SWATCHES = (
  "000000 1a1a1a 333333 4d4d4d 666666 808080 999999 b3b3b3 cccccc e6e6e6 ececec f2f2f2 f9f9f9 ffffff " +
  "800000 ff0000 808000 ffff00 008000 00ff00 008080 00ffff 000080 0000ff 800080 ff00ff " +
  "2b0000 550000 800000 aa0000 d40000 ff0000 ff2a2a ff5555 ff8080 ffaaaa ffd5d5 " +
  "280b0b 501616 782121 a02c2c c83737 d35f5f de8787 e9afaf f4d7d7 " +
  "241c1c 483737 6c5353 916f6f ac9393 c8b7b7 e3dbdb " +
  "2b1100 552200 803300 aa4400 d45500 ff6600 ff7f2a ff9955 ffb380 ffccaa ffe6d5 " +
  "28170b 502d16 784421 a05a2c c87137 d38d5f deaa87 e9c6af f4e3d7 " +
  "241f1c 483e37 6c5d53 917c6f ac9d93 c8beb7 e3dedb " +
  "2b2200 554400 806600 aa8800 d4aa00 ffcc00 ffd42a ffdd55 ffe680 ffeeaa fff6d5 " +
  "28220b 504416 786721 a0892c c8ab37 d3bc5f decd87 e9ddaf"
).split(" ");

function Palette() {
  return (
    <div className="h-[34px] shrink-0 flex">
      <div className="w-[1884px] overflow-hidden">
        <div className="h-[21px] flex">
          <Svg w={19} h={21} className="bg-white"><path d="M.5.500l18 20M18.500.5l-18 20" stroke="#800000" strokeWidth="1.500" /></Svg>
          {SWATCHES.map((c, i) => <div key={i} className="w-[19px] h-[21px] shrink-0" style={{ backgroundColor: "#" + c }} />)}
        </div>
        <div className="h-[13px] bg-[#cdcdcd] pt-[4px] pl-[3px]"><div className="w-[426px] h-[6px] rounded-[3px] bg-[#7e8281]" /></div>
      </div>
      <div className="flex-1 pl-[15px] pt-[12px]"><Svg w={6} h={10}><path d="M5.500 0L0 5l5.500 5z" fill={INK} /></Svg></div>
    </div>
  );
}

/* ---------- status bar ---------- */

function StatusBar() {
  return (
    <div className="h-[34px] shrink-0 flex items-center text-[12px] text-[#2e3436] whitespace-nowrap">
      <div className="w-[105px] pl-[2px] flex flex-col leading-[17px] tracking-[-0.25px]">
        <div className="flex"><span className="w-[40px]">Fill:</span><b className="font-semibold">Unset</b></div>
        <div className="flex"><span className="w-[40px]">Stroke:</span><b className="font-semibold">Unset</b><span className="ml-[4px] tracking-[-0.1px]">1.00</span></div>
      </div>
      <span className="w-[15px] pl-px">O:</span>
      <Spin value="100" className="w-[68px]" align="pl-[3px]" dim />
      <div className="ml-[2px] h-[34px] w-px bg-[#dcdad7]" />
      <Svg w={18} h={14} className="ml-[10px]"><path d="M1 8c4-5 12-5 16 0-4 5-12 5-16 0z" fill="#fff" stroke="#111" strokeWidth="1.300" /><circle cx="9" cy="8" r="3.500" fill="#222" /><circle cx="8" cy="7" r="1" fill="#fff" /><path d="M2 2l3 4M5.500.5L7 5M9.500 0v4M13 .5L11.500 5M16.500 2.500L14 6" stroke="#111" /></Svg>
      <div className="ml-[20px]"><OpenLock /></div>
      <div className="ml-[10px] w-[80px] h-[34px] rounded-[5px] border border-[#cdc7c2] bg-linear-to-b from-[#f7f6f5] to-[#ebe9e7] flex items-center justify-center gap-[6px] font-semibold text-[10px]">
        <span>·Layer 1</span><Svg w={10} h={6}><path d="M0 0h10L5 6z" fill={INK} /></Svg>
      </div>
      <span className="ml-px pt-[2px] tracking-[0.09px]"><b className="font-semibold">Group</b> of <b className="font-semibold">2</b> object in layer <b className="font-semibold">Layer 1</b>. Click selection to toggle scale/rotation handles (or Shift+s).</span>
      <div className="ml-auto flex items-center">
        <div className="h-[34px] w-px bg-[#dcdad7]" />
        <div className="w-[70px] pl-[10px] leading-[17px]">
          <div className="flex justify-between"><span>X:</span><span>-31.37</span></div>
          <div className="flex justify-between"><span>Y:</span><span>-9.64</span></div>
        </div>
        <span className="w-[29px] pl-[10px]">Z:</span>
        <Spin value="140%" className="w-[94px]" align="pl-[8px]" btn="w-[22px]" />
        <span className="w-[30px] pl-[10px]">R:</span>
        <Spin value="0.00°" className="w-[101px] mr-[10px]" align="pl-[16px]" btn="w-[22px]" />
      </div>
    </div>
  );
}

/* ---------- Windows taskbar ---------- */

const appIcons = {
  mail: <><path d="M0 8L12 0l12 8v14H0z" fill="#0f6cbd" /><path d="M2 7h20v6l-10 6L2 13z" fill="#f3f7fa" /><path d="M0 8l13 9L0 22z" fill="#2ea8e8" /><path d="M24 8v14H0z" fill="#3cc0f5" /></>,
  folder: <><path d="M1 2h9l1 3h11v16H1z" fill="#e8a315" /><path d="M1 6h21v14H1z" fill="#fcd462" /><path d="M5 21v-9h14v9h-4v-4H9v4z" fill="#3a96dd" /></>,
  chrome: <><circle cx="12" cy="12" r="11" fill="#de4a3c" /><path d="M2.200 7L8 16l3 7C2.500 22.500-1 14 2.200 7z" fill="#21a35b" /><path d="M12 7h10c3 8-2 16-11 16l5-9z" fill="#ffce43" /><circle cx="12" cy="12" r="5.200" fill="#fff" /><circle cx="12" cy="12" r="4.100" fill="#4587f3" /></>,
  discord: <><path d="M4 1h16c1.500 0 2 1 2 2v19l-4-2H4c-1.500 0-2-1-2-2V3c0-1 .5-2 2-2z" fill="#6678cc" /><path d="M8 6.500c2-1 6-1 8 0 2 3 3 6 2.500 8-1.500 1.500-3 1.500-3.500 0H9c-.5 1.500-2 1.500-3.500 0-.5-2 .5-5 2.500-8z" fill="#fff" /><circle cx="9.500" cy="11.500" r="1.400" fill="#6678cc" /><circle cx="14.500" cy="11.500" r="1.400" fill="#6678cc" /></>,
  atom: <><circle cx="12" cy="12" r="12" fill="#4ab587" /><g stroke="#fff" strokeWidth="1.100"><ellipse cx="12" cy="12" rx="8" ry="3" transform="rotate(10 12 12)" /><ellipse cx="12" cy="12" rx="8" ry="3" transform="rotate(70 12 12)" /><ellipse cx="12" cy="12" rx="8" ry="3" transform="rotate(130 12 12)" /></g><circle cx="12" cy="12" r="1.300" fill="#fff" /></>,
  cmd: <><rect x="1" y="3" width="22" height="18" fill="#000" stroke="#888" /><path d="M1 3h22v2H1z" fill="#ddd" /><path d="M6 7.500H3.500v3H6M8 8v.5M8 10v.5M10 7l2 4M14 11h6" stroke="#ddd" /></>,
  league: <><circle cx="13" cy="12" r="9" fill="#0c2a3c" stroke="#a8782a" strokeWidth="1.500" /><path d="M5 1h8l-2 2.500V17h9l-2 5H5l2-3V4z" fill="#d69a32" stroke="#7a4b10" /></>,
  note: <><path d="M8 1l13 2-4 18L3 16z" fill="#5fb3c9" /><path d="M9 2l10 2-3 14-12-3z" fill="#a5dbe6" /><path d="M20 2.500l2 1L18 20l-3 1z" fill="#cfcfcf" /><path d="M9 2l3 .5L6 15l-2-.5z" fill="#d7f0f4" /></>,
  gauge: <><path d="M1 14C0 4 10-3 19 3M23 9c2 6-2 12-8 13" stroke="#fff" strokeWidth="2" /><path d="M1 14c4 0 9-7 13-5l9 8c-4 7-17 8-21 0z" fill="#fff" /><path d="M3 16l5-2 3 2 4-4 5 6" stroke="#444" strokeWidth="1.300" /><circle cx="8" cy="7" r="1.500" fill="#fff" /></>,
  calc: <><rect x="3" y="0" width="18" height="24" fill="#fff" /><path d="M5 2.500h14v4.500H5z" fill="#3c3c3c" />{[10, 14.500, 19].map((y) => [6, 10.800, 15.500].map((x) => <rect key={x + "," + y} x={x} y={y} width="2" height="2" fill="#3c3c3c" />))}</>,
  paint: <><path d="M2 10c2-6 10-9 16-6s5 8 1 10c-3 1 0 4-3 7-4 3-11 2-13-3-1.500-3-2-5-1-8z" fill="#a9cfe8" stroke="#5f86a5" /><circle cx="7" cy="9" r="2" fill="#e34b3b" /><circle cx="12" cy="6.500" r="2" fill="#3aa94c" /><circle cx="6.500" cy="15" r="2" fill="#f6cf2e" /><circle cx="12" cy="17" r="2" fill="#3b6fd9" /><path d="M21 0l2 1-5 21-2-1z" fill="#b4641e" /><path d="M20 0c3-1 4 1 3 5h-3z" fill="#e7b36a" /></>,
};
const APPS = ["mail", "folder", "chrome", "discord", "atom", "cmd", "league", "note", "gauge", "calc"];

const TaskItem = ({ children, active }) => (
  <div className={"w-[49px] h-[40px] flex flex-col items-center " + (active ? "bg-[#6c6c6c]" : "")}>
    <div className="flex-1 flex items-center">{children}</div>
    <div className={"h-[2px] bg-[#b5b5ad] " + (active ? "w-[49px]" : "w-[40px]")} />
  </div>
);

function Taskbar() {
  return (
    <div className="h-[40px] shrink-0 flex items-center text-white bg-[linear-gradient(90deg,#1d1d1d_0px,#222_300px,#464646_400px,#484848_1640px,#3c3c3c_1700px,#232323_1790px,#222_1920px)]">
      <div className="w-[48px] flex justify-center"><Svg s={16}><path d="M0 2.500l6.500-1v6H0zM7.500 1.300L16 0v7.500H7.500zM0 8.500h6.500v6L0 13.600zM7.500 8.500H16V16l-8.500-1.200z" fill="#fff" /></Svg></div>
      <div className="w-[50px] flex justify-center"><Svg s={17}><circle cx="10.500" cy="6.500" r="5" stroke="#fff" strokeWidth="1.300" /><path d="M7 10.500L1 16.500" stroke="#fff" strokeWidth="1.300" /></Svg></div>
      {APPS.map((a) => <TaskItem key={a}><Svg>{appIcons[a]}</Svg></TaskItem>)}
      <TaskItem active><InkscapeLogo size={24} /></TaskItem>
      <TaskItem><Svg>{appIcons.paint}</Svg></TaskItem>
      <div className="ml-auto flex items-center text-[12px]">
        <Svg w={12} h={8} className="mr-[11px]"><path d="M1 7l5-5 5 5" stroke="#fff" strokeWidth="1.300" /></Svg>
        <Svg w={14} h={12} className="mr-[11px]"><path d="M3 1c2-1 6-1 8 0 2 3 3 6 2.500 9-1.500 1.500-3 1.500-3.500 0H4c-.5 1.500-2 1.500-3.500 0C0 7 1 4 3 1z" fill="#fff" /><circle cx="4.700" cy="6" r="1.300" fill="#444" /><circle cx="9.300" cy="6" r="1.300" fill="#444" /></Svg>
        <Svg s={14} className="mr-[7px]"><path d="M1 13C1 6 6 1 13 1" stroke="#888" strokeWidth="1.300" /><path d="M4 13c0-5 4-8.500 9-8.500M7 13c0-3.500 2.500-5.500 6-5.500M10 13c0-1.800 1-2.500 3-2.500" stroke="#fff" strokeWidth="1.300" /></Svg>
        <Svg w={17} h={14} className="mr-[6px]"><path d="M6.500 3.500h9v8h-11v-2M15.500 6h1v3" stroke="#fff" strokeWidth="1.300" /><path d="M8 5.500h6v4.500H6.500z" fill="#fff" /><path d="M1 2v4h4V2M2 0v2M4 0v2M3 6v5h2" stroke="#fff" /></Svg>
        <Svg w={17} h={14} className="mr-[8px]"><path d="M1 5h2.500L7 1.500v11L3.500 9H1z" stroke="#fff" /><path d="M9 5c1 1 1 3 0 4M11 3c2 2 2 6 0 8" stroke="#fff" /><path d="M13.500 1c3 3 3 9 0 12" stroke="#888" /></Svg>
        <Svg w={23} h={14} className="mr-[11px]"><rect x=".5" y="1" width="22" height="12" stroke="#fff" /><path d="M3 4.500h17M3 7h17" stroke="#fff" strokeDasharray="1.500 1.300" strokeWidth="1.300" /><path d="M5 10h13" stroke="#fff" /></Svg>
        <span className="w-[35px] tracking-[-0.3px]">ENG</span>
        <div className="w-[60px] flex flex-col items-center leading-[18px] tracking-[-0.45px]"><span>19:42</span><span>26/05/2020</span></div>
        <div className="w-[50px] flex pl-[13px] ml-[3px]">
          <Svg w={26} h={28} className="mt-[4px]"><path d="M1 1h16v13H9l-4 4v-4H1z" fill="#fff" /><path d="M4 4.500h10M4 7.500h10M4 10.500h6" stroke="#222" /><circle cx="17" cy="17" r="8" fill="#3a3a3a" stroke="#999" /><text x="17" y="21" textAnchor="middle" fontSize="11" fill="#fff">1</text></Svg>
        </div>
        <div className="w-px h-[40px] bg-[#555] mr-[4px]" />
      </div>
    </div>
  );
}

export default function App() {
  return (
    <div className="relative w-[1920px] h-[1080px] overflow-hidden flex flex-col bg-[#f6f5f4] font-['Open_Sans','Noto_Sans',sans-serif]">
      <Gradients />
      <TitleBar />
      <MenuBar />
      <ToolBar />
      <div className="h-[883px] shrink-0 flex">
        <Toolbox />
        <Workspace />
        <Dock />
        <IconColumn groups={COMMANDS} icons={cmdIcons} className="w-[46px]" />
        <IconColumn groups={SNAPS} icons={snapIcons} className="w-[42px]" />
      </div>
      <Palette />
      <StatusBar />
      <Taskbar />
      <ObjectMenu />
    </div>
  );
}
